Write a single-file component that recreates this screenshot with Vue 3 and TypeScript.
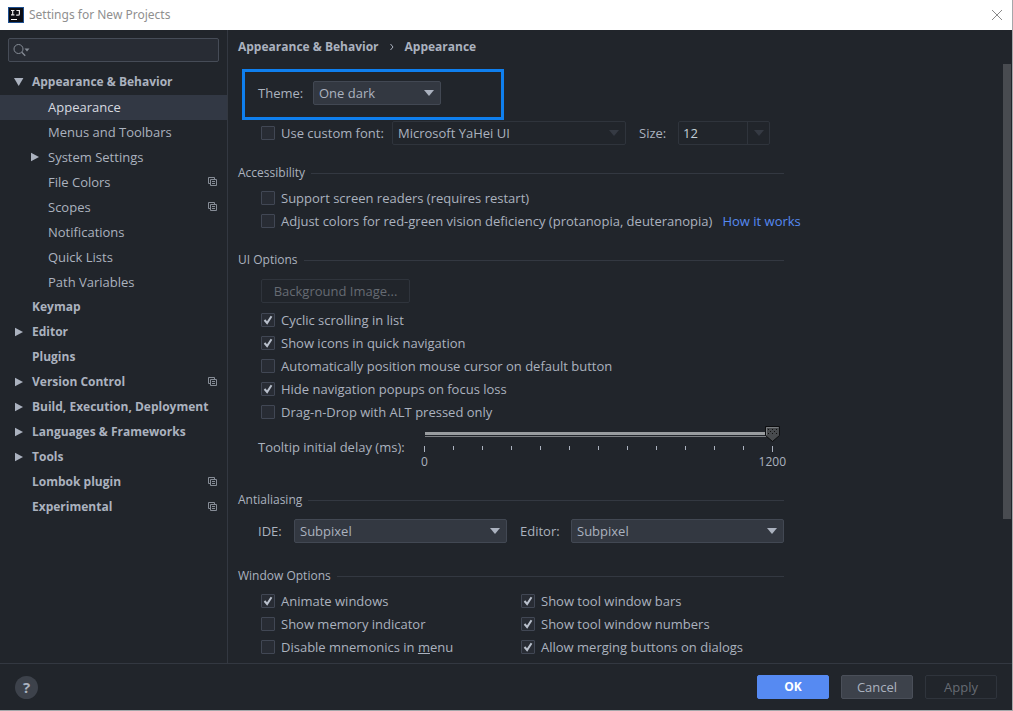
<script setup lang="ts">
import { computed, ref } from 'vue'

interface TreeItem {
  label: string
  level: 0 | 1
  arrow?: 'open' | 'closed'
  perProject?: boolean
  selected?: boolean
}

interface Option {
  id: string
  label: string
  checked: boolean
}

const tree: TreeItem[] = [
  { label: 'Appearance & Behavior', level: 0, arrow: 'open' },
  { label: 'Appearance', level: 1, selected: true },
  { label: 'Menus and Toolbars', level: 1 },
  { label: 'System Settings', level: 1, arrow: 'closed' },
  { label: 'File Colors', level: 1, perProject: true },
  { label: 'Scopes', level: 1, perProject: true },
  { label: 'Notifications', level: 1 },
  { label: 'Quick Lists', level: 1 },
  { label: 'Path Variables', level: 1 },
  { label: 'Keymap', level: 0 },
  { label: 'Editor', level: 0, arrow: 'closed' },
  { label: 'Plugins', level: 0 },
  { label: 'Version Control', level: 0, arrow: 'closed', perProject: true },
  { label: 'Build, Execution, Deployment', level: 0, arrow: 'closed' },
  { label: 'Languages & Frameworks', level: 0, arrow: 'closed' },
  { label: 'Tools', level: 0, arrow: 'closed' },
  { label: 'Lombok plugin', level: 0, perProject: true },
  { label: 'Experimental', level: 0, perProject: true },
]

const accessibility = ref<Option[]>([
  { id: 'readers', label: 'Support screen readers (requires restart)', checked: false },
  { id: 'colors', label: 'Adjust colors for red-green vision deficiency (protanopia, deuteranopia)', checked: false },
])

const uiOptions = ref<Option[]>([
  { id: 'cyclic', label: 'Cyclic scrolling in list', checked: true },
  { id: 'icons', label: 'Show icons in quick navigation', checked: true },
  { id: 'cursor', label: 'Automatically position mouse cursor on default button', checked: false },
  { id: 'popups', label: 'Hide navigation popups on focus loss', checked: true },
  { id: 'drag', label: 'Drag-n-Drop with ALT pressed only', checked: false },
])

// An underscore marks the mnemonic letter that follows it.
const windowOptions = ref<Option[]>([
  { id: 'animate', label: 'Animate windows', checked: true },
  { id: 'bars', label: 'Show tool window bars', checked: true },
  { id: 'memory', label: 'Show memory indicator', checked: false },
  { id: 'numbers', label: 'Show tool window numbers', checked: true },
  { id: 'mnemonics', label: 'Disable mnemonics in _menu', checked: false },
  { id: 'merging', label: 'Allow merging buttons on dialogs', checked: true },
])

function split(label: string): [string, string, string] {
  const at = label.indexOf('_')
  return at < 0 ? [label, '', ''] : [label.slice(0, at), label[at + 1], label.slice(at + 2)]
}

const customFont = ref(false)
const fontSize = ref('12')
const search = ref('')
const delay = ref(1200)
const thumbLeft = computed(() => `${(delay.value / 1200) * 100}%`)
</script>

<template>
  <div class="window">
    <header class="titlebar">
      <svg class="logo" viewBox="0 0 16 16" aria-hidden="true">
        <rect width="16" height="16" fill="#1d4f91" />
        <rect x="1" y="1" width="14" height="14" fill="#0b0d14" />
        <path d="M3 3.5h3.4M4.7 3.5v4.4M3 7.9h3.4M8.4 3.5h3v3.4q0 1.3-1.4 1.3H8.2" fill="none" stroke="#e8e8ea" stroke-width="1.2" />
        <rect x="3" y="12" width="6" height="1" fill="#fff" />
      </svg>
      <h1>Settings for New Projects</h1>
      <button class="close" type="button" aria-label="Close">
        <svg viewBox="0 0 12 12"><path d="M1 1l10 10M11 1L1 11" fill="none" stroke="#8a8a8a" /></svg>
      </button>
    </header>

    <div class="body">
      <aside class="sidebar">
        <div class="search">
          <svg viewBox="0 0 18 14" aria-hidden="true">
            <circle cx="5.5" cy="6" r="4.5" fill="none" stroke="#868c96" />
            <path d="M8.8 9.2l3.4 3.6" stroke="#868c96" stroke-width="1.3" />
            <path d="M11.5 5.5h5l-2.5 3z" fill="#868c96" />
          </svg>
          <input v-model="search" type="text" aria-label="Search settings" />
        </div>
        <nav>
          <ul>
            <li v-for="item in tree" :key="item.label" :class="['item', `level-${item.level}`, { selected: item.selected }]">
              <span class="arrow">
                <svg v-if="item.arrow === 'open'" viewBox="0 0 10 10"><path d="M0 1h9.4L4.7 9z" /></svg>
                <svg v-else-if="item.arrow === 'closed'" viewBox="0 0 10 10"><path d="M1 0.8v8.4L9 5z" /></svg>
              </span>
              <span class="name">{{ item.label }}</span>
              <svg v-if="item.perProject" class="project" viewBox="0 0 10 10" fill="none" stroke="#868c96">
                <path d="M2 6.5H.5v-6h6V2" />
                <path d="M2.5 2.5h6v6h-6zM4 4.5h3M4 6.5h3" />
              </svg>
            </li>
          </ul>
        </nav>
      </aside>

      <main class="main">
        <h2 class="crumbs">
          <span>Appearance &amp; Behavior</span>
          <svg viewBox="0 0 6 8" aria-hidden="true"><path d="M1.5 1l2.5 3-2.5 3" fill="none" stroke="#abb2bf" /></svg>
          <span>Appearance</span>
        </h2>

        <div class="viewport">
          <div class="form">
            <div class="highlight">
              <label for="theme">Theme:</label>
              <span class="select theme">
                <select id="theme"><option>One dark</option></select>
                <svg viewBox="0 0 10 6"><path d="M0 0h10L5 6z" /></svg>
              </span>
            </div>

            <div class="font-row">
              <label class="check">
                <span class="box">
                  <input v-model="customFont" type="checkbox" />
                  <svg viewBox="0 0 14 14"><path d="M3.5 7l2.6 3L10.5 3.2" /></svg>
                </span>
                <span>Use custom font:</span>
              </label>
              <span class="select family disabled">
                <select disabled aria-label="Font"><option>Microsoft YaHei UI</option></select>
                <svg viewBox="0 0 10 6"><path d="M0 0h10L5 6z" /></svg>
              </span>
              <label class="size-label" for="size">Size:</label>
              <span class="combo">
                <input id="size" v-model="fontSize" type="text" disabled />
                <button type="button" disabled aria-label="Choose size">
                  <svg viewBox="0 0 10 6"><path d="M0 0h10L5 6z" /></svg>
                </button>
              </span>
            </div>

            <section>
              <h3>Accessibility</h3>
              <div class="options">
                <div v-for="o in accessibility" :key="o.id" class="option">
                  <label class="check">
                    <span class="box">
                      <input v-model="o.checked" type="checkbox" />
                      <svg viewBox="0 0 14 14"><path d="M3.5 7l2.6 3L10.5 3.2" /></svg>
                    </span>
                    <span>{{ o.label }}</span>
                  </label>
                  <a v-if="o.id === 'colors'" href="#">How it works</a>
                </div>
              </div>
            </section>

            <section>
              <h3>UI Options</h3>
              <div class="options">
                <button class="button ghost image" type="button" disabled>Background Image...</button>
                <div v-for="o in uiOptions" :key="o.id" class="option">
                  <label class="check">
                    <span class="box">
                      <input v-model="o.checked" type="checkbox" />
                      <svg viewBox="0 0 14 14"><path d="M3.5 7l2.6 3L10.5 3.2" /></svg>
                    </span>
                    <span>{{ o.label }}</span>
                  </label>
                </div>
              </div>
              <div class="delay">
                <label for="delay">Tooltip initial delay (ms):</label>
                <div class="slider">
                  <div class="rail">
                    <input id="delay" v-model.number="delay" type="range" min="0" max="1200" step="100" />
                    <svg class="thumb" :style="{ left: thumbLeft }" viewBox="0 0 15 16" aria-hidden="true">
                      <path d="M.5.5h14v9l-7 6-7-6z" fill="#484b4e" stroke="#0c0d0f" />
                      <path d="M1.5 9V1.5h12" fill="none" stroke="#7a7d80" />
                      <path d="M3 3.5h10M3 7.5h10" stroke="#111" stroke-dasharray="1 3" />
                      <path d="M5 5.5h8" stroke="#111" stroke-dasharray="1 3" />
                    </svg>
                  </div>
                  <div class="ticks"><i v-for="n in 13" :key="n"></i></div>
                  <div class="scale"><span>0</span><span>1200</span></div>
                </div>
              </div>
            </section>

            <section>
              <h3>Antialiasing</h3>
              <div class="aliasing">
                <label for="ide">IDE:</label>
                <span class="select">
                  <select id="ide"><option>Subpixel</option></select>
                  <svg viewBox="0 0 10 6"><path d="M0 0h10L5 6z" /></svg>
                </span>
                <label for="editor">Editor:</label>
                <span class="select">
                  <select id="editor"><option>Subpixel</option></select>
                  <svg viewBox="0 0 10 6"><path d="M0 0h10L5 6z" /></svg>
                </span>
              </div>
            </section>

            <section>
              <h3>Window Options</h3>
              <div class="options columns">
                <div v-for="o in windowOptions" :key="o.id" class="option">
                  <label class="check">
                    <span class="box">
                      <input v-model="o.checked" type="checkbox" />
                      <svg viewBox="0 0 14 14"><path d="M3.5 7l2.6 3L10.5 3.2" /></svg>
                    </span>
                    <span>{{ split(o.label)[0] }}<u>{{ split(o.label)[1] }}</u>{{ split(o.label)[2] }}</span>
                  </label>
                </div>
              </div>
            </section>
          </div>
          <div class="scrollbar"><div></div></div>
        </div>
      </main>
    </div>

    <footer class="footer">
      <button class="help" type="button" aria-label="Help">?</button>
      <button class="button primary" type="button">OK</button>
      <button class="button" type="button">Cancel</button>
      <button class="button ghost" type="button" disabled>Apply</button>
    </footer>
  </div>
</template>

<style>
body {
  margin: 0;
  background: #21252b;
}
</style>

<style scoped>
* {
  box-sizing: border-box;
}
.window {
  display: flex;
  flex-direction: column;
  height: 100vh;
  border: solid #a5a7aa;
  border-width: 0 1px 1px 0;
  background: #21252b;
  color: #abb2bf;
  font: 13px/18px "Open Sans", "Noto Sans", sans-serif;
  white-space: nowrap;
}
button,
input,
select {
  margin: 0;
  padding: 0;
  border: 0;
  outline: 0;
  background: none;
  color: inherit;
  font: inherit;
  appearance: none;
}
select,
input:disabled {
  opacity: 1;
}
h1,
h2,
h3,
ul {
  margin: 0;
  padding: 0;
  list-style: none;
  font-size: inherit;
}
svg {
  display: block;
  flex: none;
}

.titlebar {
  display: flex;
  align-items: center;
  flex: none;
  height: 30px;
  padding: 0 9px 0 8px;
  background: #fff;
  color: #8f8f8f;
}
.titlebar h1 {
  flex: 1;
  margin-left: 5px;
  font-family: "Noto Sans", sans-serif;
  font-size: 12px;
  font-weight: 400;
}
.logo {
  width: 16px;
  height: 16px;
}
.close svg {
  width: 12px;
  height: 12px;
}

.body {
  display: flex;
  flex: 1;
  min-height: 0;
}
.sidebar {
  flex: none;
  width: 228px;
  border-right: 1px solid #333841;
  overflow: hidden;
}
.search {
  display: flex;
  align-items: center;
  gap: 4px;
  height: 24px;
  margin: 8px 8px;
  padding: 0 4px;
  border: 1px solid #464c57;
  border-radius: 2px;
  background: #282c34;
}
.search svg {
  width: 18px;
  height: 14px;
}
.search input {
  flex: 1;
  min-width: 0;
}
.item {
  display: flex;
  align-items: center;
  gap: 8px;
  height: 25px;
  padding: 0 9px 2px 14px;
}
.level-0 {
  font-size: 12px;
  font-weight: 700;
}
.level-1 {
  padding-left: 30px;
}
.item.selected {
  background: #323844;
  color: #d7dae0;
}
.name {
  flex: 1;
}
.arrow,
.arrow svg {
  width: 10px;
  height: 10px;
}
.arrow svg {
  fill: #abb2bf;
}
.project {
  width: 10px;
  height: 10px;
}

.main {
  display: flex;
  flex: 1;
  flex-direction: column;
  min-width: 0;
}
.crumbs {
  display: flex;
  align-items: center;
  flex: none;
  gap: 10px;
  height: 34px;
  padding-left: 10px;
  font-size: 12px;
}
.crumbs svg {
  width: 6px;
  height: 8px;
}
.viewport {
  display: flex;
  flex: 1;
  justify-content: space-between;
  min-height: 0;
  padding: 0 1px 0 10px;
  overflow: hidden;
}
.form {
  flex: 0 1 546px;
  min-width: 0;
  padding-top: 5px;
}
.scrollbar {
  width: 8px;
}
.scrollbar div {
  height: 76%;
  background: #484b50;
}

.highlight {
  display: flex;
  align-items: center;
  gap: 13px;
  width: 262px;
  height: 51px;
  margin-left: 4px;
  padding: 0 0 3px 13px;
  border: 3px solid #0f7fee;
}
.highlight label {
  width: 42px;
}
.select {
  display: grid;
  align-items: center;
  height: 24px;
  border: 1px solid #424853;
  border-radius: 2px;
  background: #333841;
}
.select select,
.select svg {
  grid-area: 1 / 1;
}
.select select {
  width: 100%;
  height: 22px;
  padding-left: 5px;
}
.select svg,
.combo svg {
  width: 10px;
  height: 6px;
  fill: #abb2bf;
}
.select svg {
  margin-right: 6px;
  justify-self: end;
  pointer-events: none;
}
.theme {
  width: 128px;
}
.disabled {
  border-color: #2f343c;
  background: none;
}
.disabled svg,
.combo svg {
  fill: #353a43;
}
.font-row {
  display: flex;
  align-items: center;
  height: 26px;
  padding-left: 23px;
}
.family {
  width: 234px;
}
.font-row .check {
  width: 131px;
}
.size-label {
  width: 39px;
  margin-left: 13px;
}
.combo {
  display: flex;
  width: 92px;
  height: 24px;
  border: 1px solid #2f343c;
  border-radius: 2px;
}
.combo input {
  flex: 1;
  min-width: 0;
  padding-left: 4px;
  color: #c3d0d6;
}
.combo button {
  display: grid;
  place-items: center;
  width: 22px;
  border-left: 1px solid #2f343c;
}

h3 {
  display: flex;
  align-items: center;
  gap: 6px;
  height: 18px;
  font-size: 12px;
  font-weight: 400;
}
h3::after {
  content: "";
  flex: 1;
  height: 1px;
  background: #333841;
}
section {
  padding-top: 18px;
}
.options {
  padding: 5px 0 0 23px;
}
.option {
  display: flex;
  align-items: center;
  gap: 10px;
  height: 23px;
  padding-bottom: 2px;
}
.check {
  display: flex;
  align-items: center;
  gap: 6px;
}
.box {
  display: grid;
  flex: none;
}
.box input,
.box svg {
  grid-area: 1 / 1;
  width: 14px;
  height: 14px;
}
.box input {
  border: 1px solid #414754;
  border-radius: 1px;
  background: #282c34;
}
.box svg {
  fill: none;
  stroke: #b9c0cc;
  stroke-width: 2;
  visibility: hidden;
  pointer-events: none;
}
.box input:checked + svg {
  visibility: visible;
}
a {
  color: #568af2;
  text-decoration: none;
}
.columns {
  display: grid;
  grid-template-columns: 260px 1fr;
}

.button {
  height: 24px;
  width: 72px;
  border: 1px solid #4a4f59;
  border-radius: 2px;
  background: #3d424b;
}
.ghost {
  border-color: #2f343c;
  background: none;
  color: #666b73;
}
.image {
  display: block;
  width: 149px;
  margin: 5px 0 6px;
}
.primary {
  border-color: #568af2;
  background: #568af2;
  color: #fff;
  font-size: 12px;
  font-weight: 700;
}

.delay {
  display: flex;
  padding: 2px 0 2px 20px;
}
.delay label {
  width: 166px;
  padding-top: 12px;
}
.slider {
  width: 348px;
}
.rail {
  position: relative;
  height: 16px;
}
.rail input {
  display: block;
  width: 363px;
  height: 16px;
  margin-left: -7px;
}
.rail input::-webkit-slider-runnable-track {
  height: 5px;
  margin: 0 8px;
  background: linear-gradient(#999c9f 0 3px, #21252b 3px 4px, #7c7f83 4px);
}
.rail input::-webkit-slider-thumb {
  appearance: none;
  width: 15px;
  height: 5px;
  opacity: 0;
}
.thumb {
  position: absolute;
  top: 0;
  width: 15px;
  height: 16px;
  margin-left: -7px;
  pointer-events: none;
}
.ticks {
  display: flex;
  justify-content: space-between;
  height: 7px;
  margin: 4px -1px 0 0;
}
.ticks i {
  width: 1px;
  height: 4px;
  background: #abb2bf;
}
.ticks i:first-child,
.ticks i:last-child {
  height: 6px;
}
.scale {
  display: flex;
  justify-content: space-between;
  margin: 0 -14px 0 -3px;
  font-size: 12px;
}

.aliasing {
  display: grid;
  grid-template-columns: 36px 1fr 64px 1fr;
  align-items: center;
  padding: 10px 0 6px 20px;
}
.aliasing label:nth-of-type(2) {
  padding-left: 13px;
}

.footer {
  display: flex;
  align-items: center;
  flex: none;
  gap: 12px;
  height: 47px;
  padding: 0 15px;
  border-top: 1px solid #333841;
}
.help {
  width: 23px;
  height: 23px;
  margin-right: auto;
  border-radius: 50%;
  background: #3d424b;
  font-size: 15px;
  font-weight: 700;
}
</style>
